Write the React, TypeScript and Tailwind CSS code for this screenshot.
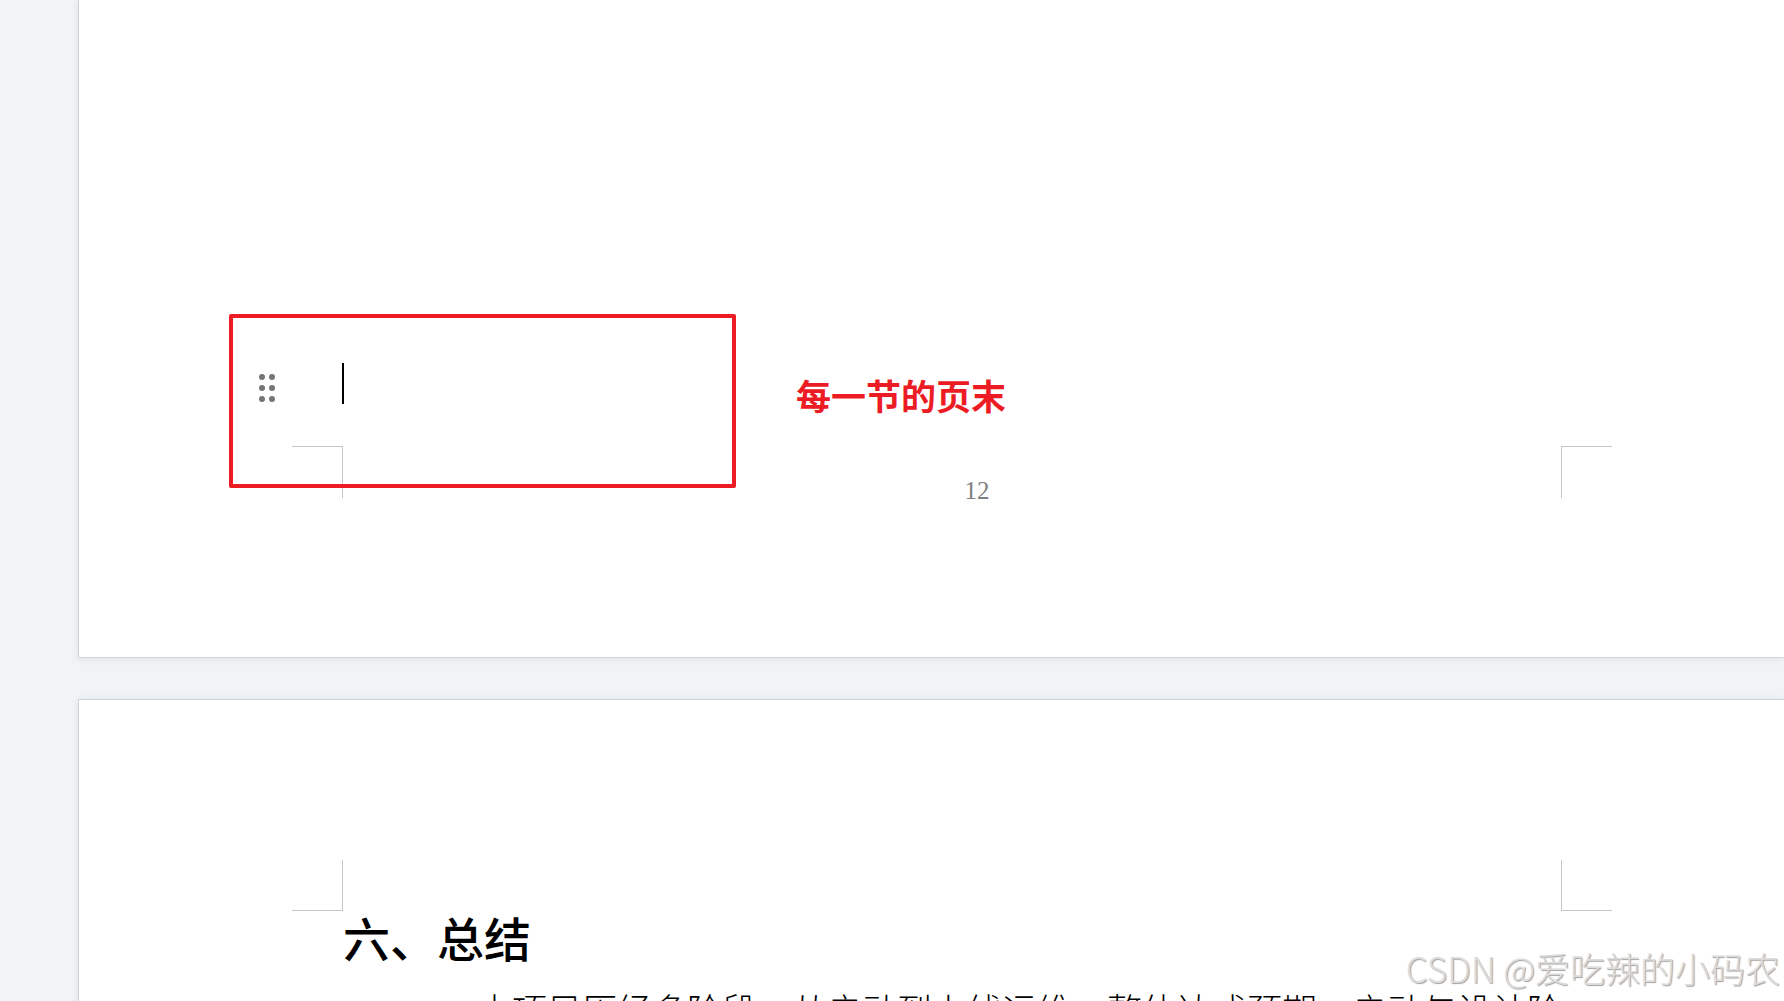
import type { ReactNode } from 'react';

const sans = "font-['Noto_Sans_CJK_SC',sans-serif]";

const CropMark = ({ className }: { className: string }) => (
  <span aria-hidden="true" className={`w-[51px] shrink-0 border-[#c6c6c6] ${className}`} />
);

const Sheet = ({ children, className }: { children: ReactNode; className: string }) => (
  <section
    className={`relative border-l border-[#d0d5d9] bg-white shadow-[0_1px_8px_rgba(0,0,0,0.08)] ${className}`}
  >
    {children}
  </section>
);

const DragHandle = () => (
  <button type="button" aria-label="段落" className="grid h-[28px] w-4 shrink-0 place-items-center">
    <svg width="16" height="28" viewBox="0 0 16 28" fill="#757575" aria-hidden="true">
      {[3, 14, 25].map((y) => (
        <g key={y}>
          <circle cx="3" cy={y} r="3" />
          <circle cx="13" cy={y} r="3" />
        </g>
      ))}
    </svg>
  </button>
);

const Annotation = () => (
  <>
    <div className="absolute top-[314px] left-[150px] h-[174px] w-[507px] rounded-[2px] border-4 border-[#ed1c24]" />
    <p
      className={`absolute top-[377px] left-[717px] text-[35px] leading-9 font-bold whitespace-nowrap text-[#ed1c24] ${sans}`}
    >
      每一节的页末
    </p>
  </>
);

export default function App() {
  return (
    <main lang="zh-CN" className="relative h-screen overflow-hidden bg-[#f0f4f7] pl-[78px]">
      <Sheet className="border-b pt-[363px] pb-[152px]">
        <div className="flex h-[41px] items-end pl-[180px]">
          <div className="pb-[2px]">
            <DragHandle />
          </div>
          <span className="ml-[67px] h-full w-[2px] bg-black" />
        </div>
        <div className="mt-[42px] flex items-start justify-between pr-[172px] pl-[213px]">
          <CropMark className="h-[52px] border-t border-r" />
          <footer className="pt-[31px] pl-[50px] font-['Liberation_Serif',serif] text-[25px] leading-7 text-[#7f7f7f]">
            12
          </footer>
          <CropMark className="h-[52px] border-t border-l" />
        </div>
        <Annotation />
      </Sheet>

      <Sheet className="mt-[41px] border-t pt-40">
        <div className="flex justify-between pr-[172px] pl-[213px]">
          <CropMark className="h-[51px] border-r border-b" />
          <CropMark className="h-[51px] border-b border-l" />
        </div>
        <article className={`pr-[200px] pl-[264px] text-black ${sans}`}>
          <h1 className="text-[47px] leading-[52px] font-medium">六、总结</h1>
          <p className="mt-7 pl-[134px] text-[35px] leading-[36px] font-light whitespace-nowrap">
            本项目历经多阶段，从启动到上线运维，整体达成预期。启动与设计阶
          </p>
        </article>
      </Sheet>

      <p
        className={`absolute right-1 bottom-[13px] text-[35px] leading-10 font-light whitespace-nowrap text-[#dcdcdc] [text-shadow:1px_1px_1px_#a0a0a0] ${sans}`}
      >
        CSDN @爱吃辣的小码农
      </p>
    </main>
  );
}
